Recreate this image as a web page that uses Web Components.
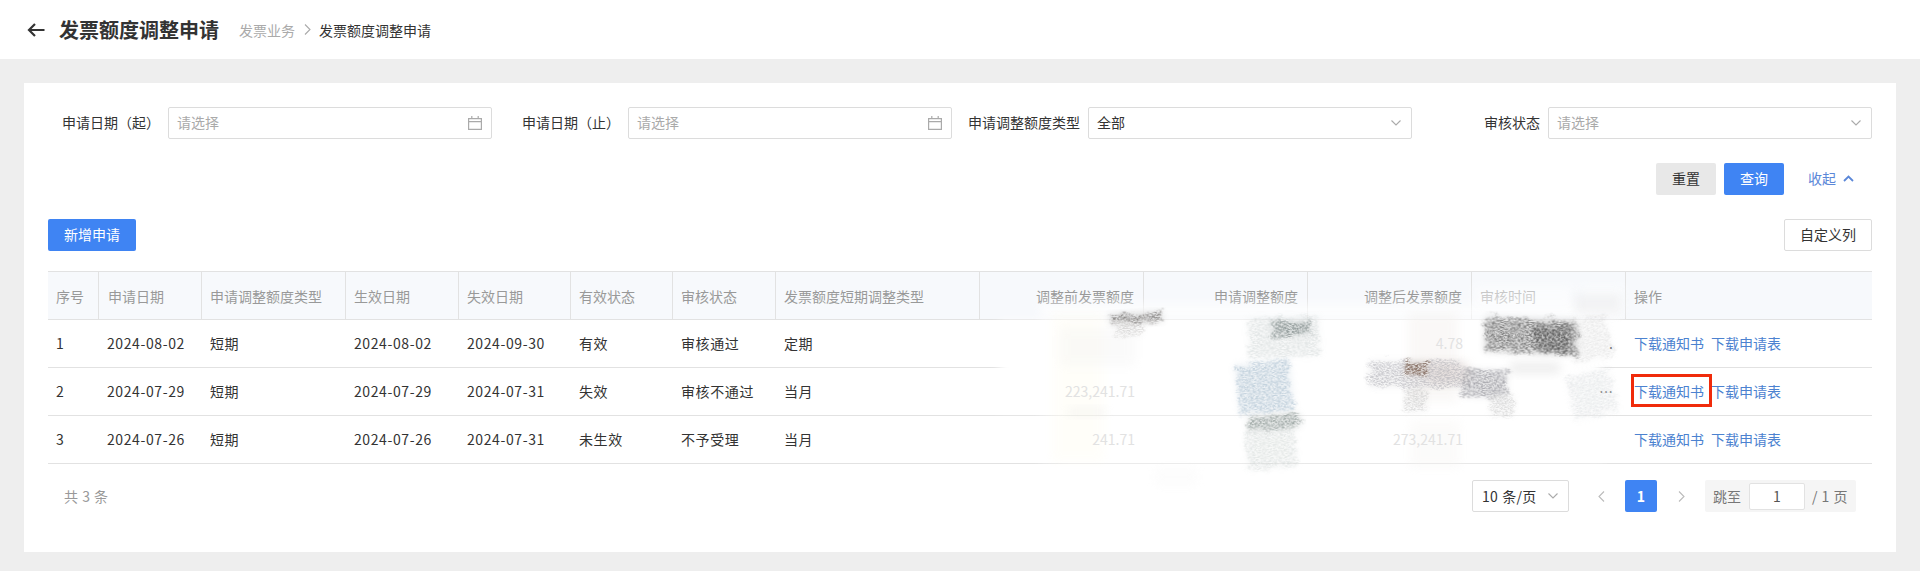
<!DOCTYPE html>
<html lang="zh-CN">
<head>
<meta charset="utf-8">
<title>发票额度调整申请</title>
<style>
    html, body { margin: 0; padding: 0; background: #eeeeee; }
    body { font: 14px "Noto Sans CJK SC", "Liberation Sans", sans-serif; color: #333; }
</style>
</head>
<body>
<quota-page></quota-page>

<script>
const FONT = '"Noto Sans CJK SC", "Liberation Sans", sans-serif';
const ICONS = {
    down: '<svg width="10" height="6" viewBox="0 0 10 6" fill="none" stroke="currentColor" stroke-width="1.1"><path d="M.5.5 5 5 9.5.5"/></svg>',
    up: '<svg width="11" height="7" viewBox="0 0 11 7" fill="none" stroke="currentColor" stroke-width="1.8"><path d="M1 6 5.5 1.5 10 6"/></svg>',
    left: '<svg width="7" height="11" viewBox="0 0 7 11" fill="none" stroke="currentColor" stroke-width="1.1"><path d="M6 .5 1 5.5l5 5"/></svg>',
    right: '<svg width="7" height="11" viewBox="0 0 7 11" fill="none" stroke="currentColor" stroke-width="1.1"><path d="M1 .5l5 5-5 5"/></svg>',
    calendar: '<svg width="14" height="14" viewBox="0 0 14 14" fill="none" stroke="currentColor" stroke-width="1.2"><path d="M.6 2.6h12.8v10.8H.6zM.6 5.6h12.8M3.8 0v3M10.2 0v3"/></svg>',
    back: '<svg width="18" height="14" viewBox="0 0 18 14" fill="none" stroke="currentColor" stroke-width="2.2"><path d="M17.5 7H2M8 1 2 7l6 6"/></svg>'
};

class PageHeader extends HTMLElement {
    constructor() {
        super();
        this.attachShadow({ mode: "open" });
        this.shadowRoot.innerHTML = `
            <style>
                :host { display: flex; align-items: center; height: 59px; padding-left: 27px; background: #fff; color: #333; }
                .back { display: flex; margin-right: 14px; }
                h1 { margin: 0 20px 0 0; font-size: 20px; font-weight: 700; line-height: 28px; }
                .crumb { color: #aaa; }
                .sep { display: flex; margin: 0 8px 0 9px; color: #aaa; }
                .now { color: #333; }
            </style>
            <span class="back">${ICONS.back}</span>
            <h1>${this.getAttribute("title")}</h1>
            <span class="crumb">${this.getAttribute("parent")}</span>
            <span class="sep">${ICONS.right}</span>
            <span class="now">${this.getAttribute("title")}</span>
        `;
    }
}

class FormField extends HTMLElement {
    constructor() {
        super();
        this.attachShadow({ mode: "open" });
        const value = this.getAttribute("value");
        const isDate = this.getAttribute("icon") === "calendar";
        this.shadowRoot.innerHTML = `
            <style>
                :host { display: flex; align-items: center; }
                label { width: 120px; box-sizing: border-box; padding: 0 8px 2px 0; text-align: right; color: #333; white-space: nowrap; }
                .box { flex: 1; display: flex; align-items: center; justify-content: space-between; height: 32px; box-sizing: border-box; padding: 0 ${isDate ? 9 : 10}px 0 8px; background: #fff; border: 1px solid #dcdcdc; border-radius: 2px; }
                .text { padding-bottom: 2px; color: ${value ? "#333" : "#aaa"}; }
                .icon { display: flex; color: #aaa; }
            </style>
            <label><slot></slot></label>
            <div class="box"><span class="text">${value || "请选择"}</span><span class="icon">${isDate ? ICONS.calendar : ICONS.down}</span></div>
        `;
    }
}

class UiButton extends HTMLElement {
    constructor() {
        super();
        this.attachShadow({ mode: "open" });
        this.shadowRoot.innerHTML = `
            <style>
                :host { display: inline-flex; align-items: center; justify-content: center; height: 32px; box-sizing: border-box; padding-bottom: 2px; border-radius: 2px; border: 1px solid transparent; }
                :host([kind="primary"]) { background: #3f84f3; color: #fff; }
                :host([kind="muted"]) { background: #e8e8e8; color: #333; }
                :host([kind="plain"]) { background: #fff; color: #333; border-color: #dcdcdc; }
            </style>
            <slot></slot>
        `;
        this.style.width = (this.getAttribute("w") || 60) + "px";
    }
}

class FilterForm extends HTMLElement {
    constructor() {
        super();
        this.attachShadow({ mode: "open" });
        this.shadowRoot.innerHTML = `
            <style>
                :host { display: block; }
                .grid { display: grid; grid-template-columns: repeat(4, 1fr); column-gap: 16px; }
                .actions { display: flex; justify-content: flex-end; align-items: center; gap: 8px; margin-top: 24px; }
                .fold { display: flex; align-items: center; gap: 7px; margin-left: 16px; width: 64px; padding-bottom: 2px; color: #5b87d8; }
            </style>
            <div class="grid"><slot></slot></div>
            <div class="actions">
                <ui-button kind="muted">重置</ui-button>
                <ui-button kind="primary">查询</ui-button>
                <span class="fold">收起${ICONS.up}</span>
            </div>
        `;
    }
}

// 模糊涂抹层，坐标直接用页面坐标，方便对照
class SmudgeLayer extends HTMLElement {
    constructor() {
        super();
        this.attachShadow({ mode: "open" });
        const wash = [
            [1000, 322, 600, 88, 1], [1040, 416, 565, 46, .55], [1040, 304, 580, 15, .7], [1473, 286, 100, 22, .5],
            [1580, 286, 44, 28, .5], [1060, 468, 240, 22, .7]
        ];
        const soft = [
            [1052, 312, 52, 150, "#fffbe6", .2], [1060, 328, 75, 38, "#eeeeee", .25], [1068, 408, 38, 8, "#d8d8d8", .2],
            [1155, 468, 42, 18, "#eeeeee", .15], [1408, 312, 50, 90, "#f3efec", .4], [1410, 420, 50, 48, "#f4f2ef", .3],
            [1575, 294, 46, 20, "#e6e6e8", .45], [1510, 362, 50, 12, "#dcdcdc", .45]
        ];
        // x, y, w, h, colour, opacity, tilt
        const grain = [
            [1110, 313, 52, 10, "#6d6a68", .7, -3], [1116, 323, 26, 12, "#b0aeac", .35, 0], [1248, 317, 72, 40, "#c4cccc", .4, -2],
            [1272, 322, 38, 13, "#737f7e", .65, -2], [1237, 362, 55, 50, "#a6bccd", .6, -6], [1248, 415, 52, 14, "#85918e", .7, -5],
            [1246, 430, 50, 38, "#c4ccca", .38, -4], [1485, 319, 92, 34, "#5c5c5c", .7, 2], [1535, 326, 36, 26, "#3d3d3d", .45, 2],
            [1570, 318, 40, 42, "#cccccc", .32, -14], [1370, 361, 93, 26, "#a9a9b0", .5, 0], [1405, 387, 22, 24, "#bdbdbd", .42, 0],
            [1463, 370, 44, 27, "#84848c", .6, 2], [1490, 395, 24, 20, "#c0c0c0", .42, 0], [1570, 372, 44, 44, "#cfd3d6", .35, -14],
            [1405, 362, 22, 13, "#806454", .75, 0]
        ];
        const tilt = r => `transform="rotate(${r[6]} ${r[0] + r[2] / 2} ${r[1] + r[3] / 2})"`;
        this.shadowRoot.innerHTML = `
            <style>
                :host { position: absolute; left: 0; top: 0; z-index: 1; display: block; width: 1824px; height: 230px; pointer-events: none; }
                svg { display: block; }
                .mark { position: absolute; left: 1583px; top: 103px; width: 81px; height: 33px; box-sizing: border-box; border: 3px solid #f02b0b; }
            </style>
            <svg width="1824" height="230" viewBox="48 271 1824 230">
                <defs>
                    <filter id="blur" x="-30%" y="-50%" width="160%" height="200%"><feGaussianBlur stdDeviation="5"/></filter>
                    <filter id="under" x="-30%" y="-50%" width="160%" height="200%"><feGaussianBlur stdDeviation="3.5"/></filter>
                    <filter id="grain" x="-25%" y="-40%" width="150%" height="180%" color-interpolation-filters="sRGB">
                        <feGaussianBlur in="SourceGraphic" stdDeviation="1.6" result="s"/>
                        <feTurbulence type="fractalNoise" baseFrequency="0.07 0.12" numOctaves="2" seed="4" result="low"/>
                        <feDisplacementMap in="s" in2="low" scale="14" xChannelSelector="R" yChannelSelector="G" result="d"/>
                        <feTurbulence type="fractalNoise" baseFrequency="0.38 0.85" numOctaves="3" seed="7" result="n"/>
                        <feColorMatrix in="n" type="matrix" values="0 0 0 0 0  0 0 0 0 0  0 0 0 0 0  3 0 0 0 -1.05" result="m"/>
                        <feComposite in="d" in2="m" operator="in"/>
                        <feGaussianBlur stdDeviation="0.45"/>
                    </filter>
                </defs>
                ${wash.map(r => `<rect x="${r[0]}" y="${r[1]}" width="${r[2]}" height="${r[3]}" fill="#fff" opacity="${r[4]}" filter="url(#blur)"/>`).join("")}
                ${soft.map(r => `<rect x="${r[0]}" y="${r[1]}" width="${r[2]}" height="${r[3]}" fill="${r[4]}" opacity="${r[5]}" filter="url(#blur)"/>`).join("")}
                <rect x="1427" y="362" width="42" height="22" fill="#e4d6cf" opacity=".4" filter="url(#blur)"/>
                ${grain.map(r => `
                    <rect x="${r[0]}" y="${r[1]}" width="${r[2]}" height="${r[3]}" fill="${r[4]}" opacity="${r[5] * .3}" filter="url(#under)" ${tilt(r)}/>
                    <rect x="${r[0]}" y="${r[1]}" width="${r[2]}" height="${r[3]}" fill="${r[4]}" opacity="${r[5]}" filter="url(#grain)" ${tilt(r)}/>`).join("")}
            </svg>
            <div class="mark"></div>
        `;
    }
}

class DataTable extends HTMLElement {
    constructor() {
        super();
        this.attachShadow({ mode: "open" });
        const heads = ["序号", "申请日期", "申请调整额度类型", "生效日期", "失效日期", "有效状态", "审核状态", "发票额度短期调整类型", "调整前发票额度", "申请调整额度", "调整后发票额度", "审核时间", "操作"];
        const rows = [
            ["1", "2024-08-02", "短期", "2024-08-02", "2024-09-30", "有效", "审核通过", "定期", "", "", "4.78", "."],
            ["2", "2024-07-29", "短期", "2024-07-29", "2024-07-31", "失效", "审核不通过", "当月", "223,241.71", "", "", "…"],
            ["3", "2024-07-26", "短期", "2024-07-26", "2024-07-31", "未生效", "不予受理", "当月", "241.71", "", "273,241.71", ""]
        ];
        const numeric = i => i >= 8 && i <= 10;
        const head = heads.map((h, i) => `<div class="th ${numeric(i) ? "num" : ""}">${h}</div>`).join("");
        const cls = i => i === 11 ? "dots" : i >= 8 ? "faint num" : "";
        const body = rows.map(r => `
            <div class="row">
                ${r.map((c, i) => `<div class="td ${cls(i)}">${c}</div>`).join("")}
                <div class="td ops"><a>下载通知书</a><a>下载申请表</a></div>
            </div>`).join("");
        this.shadowRoot.innerHTML = `
            <style>
                :host { display: block; position: relative; --cols: 51px 103px 144px 113px 112px 102px 103px 204px 164px 164px 164px 154px 246px; }
                .row { display: grid; grid-template-columns: var(--cols); height: 48px; border-bottom: 1px solid #e2e2e2; box-sizing: border-box; }
                .row.head { height: 49px; border-top: 1px solid #e2e2e2; background: #f7f9fc; }
                .th, .td { display: flex; align-items: center; padding: 0 8px; white-space: nowrap; overflow: hidden; box-sizing: border-box; }
                .th { color: #999; border-right: 1px solid #e2e2e2; }
                .th:nth-child(2) { padding-left: 9px; }
                .th:last-child { border-right: 0; }
                .td { padding-bottom: 2px; color: #333; letter-spacing: .6px; }
                .num { justify-content: flex-end; padding-right: 9px; }
                .faint { position: relative; z-index: 2; color: #e2e2e2; letter-spacing: 0; }
                .dots { position: relative; z-index: 2; justify-content: flex-end; padding-right: 13px; color: #777; letter-spacing: 0; }
                .ops { gap: 7px; letter-spacing: 0; }
                a { color: #4c82d0; }
            </style>
            <div class="row head">${head}</div>
            ${body}
            <smudge-layer></smudge-layer>
        `;
    }
}

class PagerBar extends HTMLElement {
    constructor() {
        super();
        this.attachShadow({ mode: "open" });
        this.shadowRoot.innerHTML = `
            <style>
                :host { display: flex; align-items: center; justify-content: space-between; height: 32px; padding: 0 16px; }
                .total { color: #999; word-spacing: 1px; }
                .right { display: flex; align-items: center; gap: 8px; }
                .size { display: flex; align-items: center; justify-content: space-between; width: 97px; height: 32px; box-sizing: border-box; padding: 0 10px 0 9px; margin-right: 8px; border: 1px solid #dcdcdc; border-radius: 2px; color: #333; white-space: nowrap; word-spacing: 1px; letter-spacing: .2px; }
                .size span { display: flex; color: #aaa; }
                .nav { display: flex; align-items: center; justify-content: center; width: 32px; height: 32px; color: #bbb; }
                .cur { display: flex; align-items: center; justify-content: center; width: 32px; height: 32px; border-radius: 2px; background: #3f84f3; color: #fff; font-weight: 700; }
                .jump { display: flex; align-items: center; width: 151px; height: 32px; box-sizing: border-box; padding-left: 8px; background: #f5f5f5; border-radius: 2px; color: #777; word-spacing: 1px; white-space: nowrap; }
                .jump b { display: flex; align-items: center; justify-content: center; width: 56px; height: 27px; margin: 0 7px 0 8px; box-sizing: border-box; background: #fff; border: 1px solid #e2e2e2; border-radius: 2px; font-weight: 400; color: #555; }
            </style>
            <span class="total">共 3 条</span>
            <div class="right">
                <div class="size">10 条/页<span>${ICONS.down}</span></div>
                <div class="nav">${ICONS.left}</div>
                <div class="cur">1</div>
                <div class="nav">${ICONS.right}</div>
                <div class="jump">跳至<b>1</b>/ 1 页</div>
            </div>
        `;
    }
}

class QuotaPage extends HTMLElement {
    constructor() {
        super();
        this.attachShadow({ mode: "open" });
        this.shadowRoot.innerHTML = `
            <style>
                :host { display: block; font-family: ${FONT}; font-size: 14px; line-height: 20px; }
                main { padding: 24px 24px 19px; }
                .card { padding: 24px 24px 40px; background: #fff; }
                .tools { display: flex; justify-content: space-between; margin: 24px 0 20px; }
                pager-bar { margin-top: 16px; }
            </style>
            <page-header title="发票额度调整申请" parent="发票业务"></page-header>
            <main>
                <div class="card">
                    <filter-form>
                        <form-field icon="calendar">申请日期（起）</form-field>
                        <form-field icon="calendar">申请日期（止）</form-field>
                        <form-field value="全部">申请调整额度类型</form-field>
                        <form-field>审核状态</form-field>
                    </filter-form>
                    <div class="tools">
                        <ui-button kind="primary" w="88">新增申请</ui-button>
                        <ui-button kind="plain" w="88">自定义列</ui-button>
                    </div>
                    <data-table></data-table>
                    <pager-bar></pager-bar>
                </div>
            </main>
        `;
    }
}

customElements.define("page-header", PageHeader);
customElements.define("form-field", FormField);
customElements.define("ui-button", UiButton);
customElements.define("filter-form", FilterForm);
customElements.define("smudge-layer", SmudgeLayer);
customElements.define("data-table", DataTable);
customElements.define("pager-bar", PagerBar);
customElements.define("quota-page", QuotaPage);
</script>
</body>
</html>
